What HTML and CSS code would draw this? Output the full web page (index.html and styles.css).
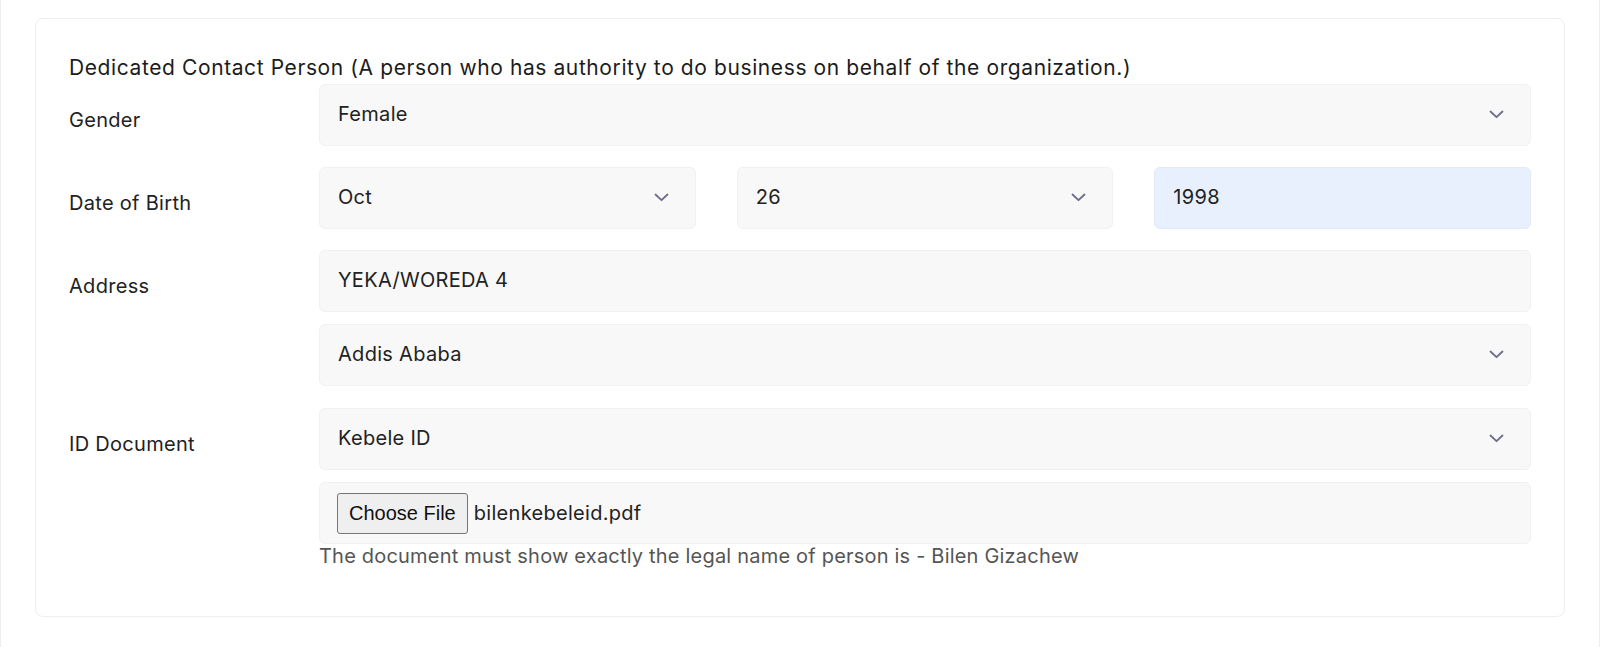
FILE: index.html
```html
<!DOCTYPE html>
<html lang="en">
<head>
  <meta charset="UTF-8">
  <title>Dedicated Contact Person</title>
  <link rel="stylesheet" href="styles.css">
</head>
<body>
<div class="page">
  <div class="card">
    <p class="title">Dedicated Contact Person (A person who has authority to do business on behalf of the organization.)</p>

    <div class="row first">
      <div class="label">Gender</div>
      <div class="fields">
        <div class="field select">
          <span>Female</span>
          <svg class="chev" width="15" height="9" viewBox="0 0 15 9"><path d="M1.5 1.5 L7.5 7.2 L13.5 1.5" fill="none" stroke="#6c6c8a" stroke-width="1.8" stroke-linecap="round" stroke-linejoin="round"/></svg>
        </div>
      </div>
    </div>

    <div class="row">
      <div class="label">Date of Birth</div>
      <div class="fields dob">
        <div class="field select">
          <span>Oct</span>
          <svg class="chev" width="15" height="9" viewBox="0 0 15 9"><path d="M1.5 1.5 L7.5 7.2 L13.5 1.5" fill="none" stroke="#6c6c8a" stroke-width="1.8" stroke-linecap="round" stroke-linejoin="round"/></svg>
        </div>
        <div class="field select">
          <span>26</span>
          <svg class="chev" width="15" height="9" viewBox="0 0 15 9"><path d="M1.5 1.5 L7.5 7.2 L13.5 1.5" fill="none" stroke="#6c6c8a" stroke-width="1.8" stroke-linecap="round" stroke-linejoin="round"/></svg>
        </div>
        <div class="field autofill">
          <span>1998</span>
        </div>
      </div>
    </div>

    <div class="row address">
      <div class="label">Address</div>
      <div class="fields">
        <div class="field">
          <span>YEKA/WOREDA 4</span>
        </div>
        <div class="field select">
          <span>Addis Ababa</span>
          <svg class="chev" width="15" height="9" viewBox="0 0 15 9"><path d="M1.5 1.5 L7.5 7.2 L13.5 1.5" fill="none" stroke="#6c6c8a" stroke-width="1.8" stroke-linecap="round" stroke-linejoin="round"/></svg>
        </div>
      </div>
    </div>

    <div class="row">
      <div class="label">ID Document</div>
      <div class="fields">
        <div class="field select">
          <span>Kebele ID</span>
          <svg class="chev" width="15" height="9" viewBox="0 0 15 9"><path d="M1.5 1.5 L7.5 7.2 L13.5 1.5" fill="none" stroke="#6c6c8a" stroke-width="1.8" stroke-linecap="round" stroke-linejoin="round"/></svg>
        </div>
        <div class="field file">
          <span class="file-btn">Choose File</span>
          <span class="file-name">bilenkebeleid.pdf</span>
        </div>
        <p class="help">The document must show exactly the legal name of person is - Bilen Gizachew</p>
      </div>
    </div>
  </div>
</div>
</body>
</html>
```

FILE: styles.css
```css
body {
  margin: 0;
  font-family: Inter, "Open Sans", sans-serif;
  color: #222;
  background-color: #fff;
}

.page {
  border-left: 1px solid #eee;
  border-right: 1px solid #eee;
  padding: 18px 34px 31px;
  min-height: 598px;
}

.card {
  border: 1px solid #eee;
  border-radius: 8px;
  padding: 37px 33px 48px;
}

.title {
  margin: 0 0 4px;
  font-size: 21px;
  line-height: 24px;
  letter-spacing: 0.6px;
  color: #1c1c1c;
}

.row {
  display: grid;
  grid-template-columns: 250px 1fr;
  margin-bottom: 21px;
}

.row.address {
  margin-bottom: 22px;
}

.row:last-child {
  margin-bottom: 0;
}

.label {
  padding-top: 24px;
  font-size: 20px;
  line-height: 24px;
  letter-spacing: 0.3px;
}

.fields {
  display: flex;
  flex-direction: column;
  gap: 12px;
}

.fields.dob {
  flex-direction: row;
  gap: 41px;
}

.fields.dob .field {
  flex: 1;
}

.field {
  box-sizing: border-box;
  height: 62px;
  display: flex;
  align-items: center;
  justify-content: space-between;
  padding: 0 26px 2px 18px;
  background-color: #f8f8f8;
  border: 1px solid #f1f1f1;
  border-radius: 6px;
  font-size: 20px;
  letter-spacing: 0.3px;
}

.field.autofill {
  background-color: #e8f0fe;
  border-color: #e3ebf9;
}

.field.file {
  justify-content: flex-start;
  padding: 0 0 0 17px;
}

.file-btn {
  box-sizing: border-box;
  height: 41px;
  padding: 0 11px;
  display: flex;
  align-items: center;
  background-color: #efefef;
  border: 1px solid #767676;
  border-radius: 3px;
  font-family: "Liberation Sans", Arial, sans-serif;
  font-size: 20px;
  letter-spacing: 0;
  color: #111;
}

.file-name {
  margin-left: 6px;
}

.help {
  margin: -12px 0 0;
  font-size: 20px;
  line-height: 24px;
  letter-spacing: 0.2px;
  color: #555;
}
```
